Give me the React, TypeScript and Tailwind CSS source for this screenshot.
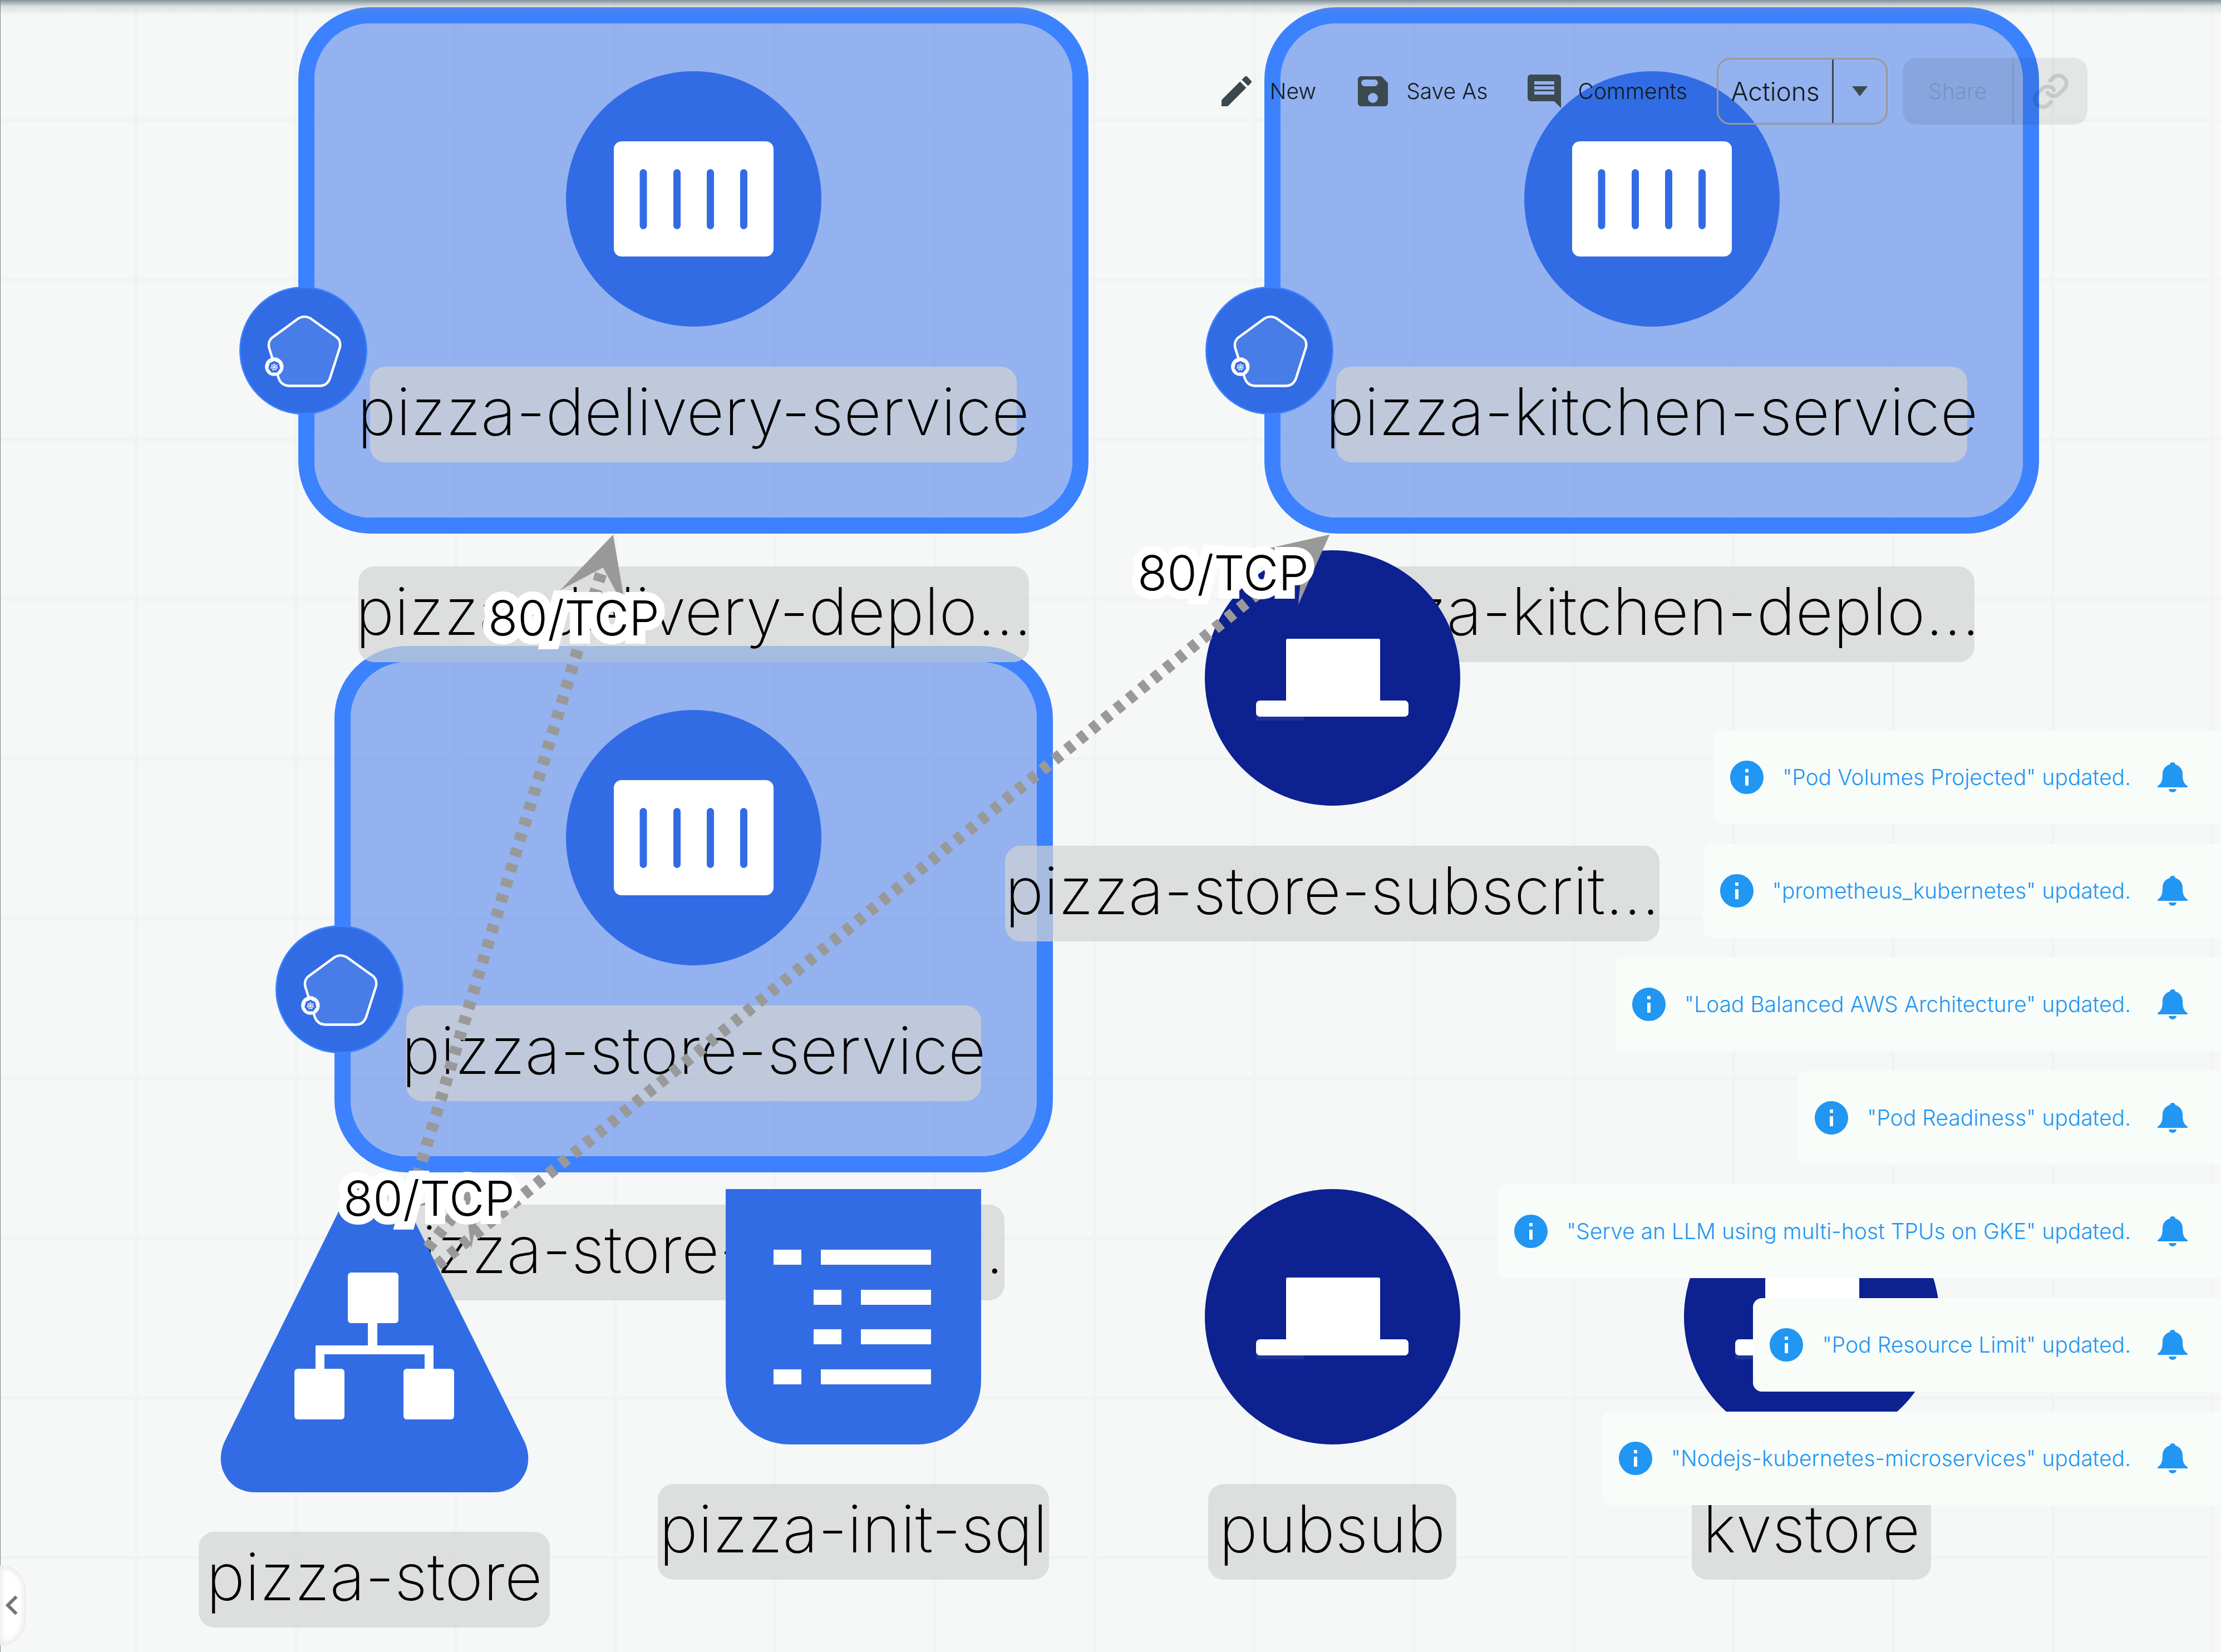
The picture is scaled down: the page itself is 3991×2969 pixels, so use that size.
import { Link } from "lucide-react";

const LABEL =
  "absolute flex items-center justify-center rounded-[28px] bg-[#d3d3d3]/70 h-[172px] pb-3 text-[118px] leading-none font-extralight whitespace-nowrap";

type Placed = { text: string; place: string };

const compounds = [
  { id: "delivery", place: "left-[536px] top-[13px] w-[1420px] h-[946px]" },
  { id: "kitchen", place: "left-[2272px] top-[13px] w-[1392px] h-[946px]" },
  { id: "store", place: "left-[601px] top-[1161px] w-[1291px] h-[946px]" },
];

const compoundLabels: Placed[] = [
  { text: "pizza-delivery-deplo...", place: "left-[644px] top-[1018px] w-[1205px]" },
  { text: "pizza-kitchen-deplo...", place: "left-[2387px] top-[1018px] w-[1161px]" },
  { text: "pizza-store-deploy...", place: "left-[687px] top-[2165px] w-[1118px]" },
];

const badges = [
  { id: "delivery", place: "left-[430px] top-[515px]" },
  { id: "kitchen", place: "left-[2166px] top-[515px]" },
  { id: "store", place: "left-[495px] top-[1663px]" },
];

const containers = [
  { id: "delivery", place: "left-[1017px] top-[128px]" },
  { id: "kitchen", place: "left-[2739px] top-[128px]" },
  { id: "store", place: "left-[1017px] top-[1276px]" },
];

const serviceLabels: Placed[] = [
  { text: "pizza-delivery-service", place: "left-[665px] top-[659px] w-[1162px]" },
  { text: "pizza-kitchen-service", place: "left-[2401px] top-[659px] w-[1134px]" },
  { text: "pizza-store-service", place: "left-[730px] top-[1807px] w-[1033px]" },
];

const hats = [
  { id: "subscription", place: "left-[2165px] top-[989px]" },
  { id: "pubsub", place: "left-[2165px] top-[2137px]" },
  { id: "kvstore", place: "left-[3026px] top-[2137px]" },
];

const nodeLabels: Placed[] = [
  { text: "pizza-store-subscrit...", place: "left-[1806px] top-[1520px] w-[1176px]" },
  { text: "pizza-store", place: "left-[357px] top-[2753px] w-[631px]" },
  { text: "pizza-init-sql", place: "left-[1182px] top-[2667px] w-[703px]" },
  { text: "pubsub", place: "left-[2171px] top-[2667px] w-[446px]" },
  { text: "kvstore", place: "left-[3040px] top-[2667px] w-[430px]" },
];

const edgeLabels: Placed[] = [
  { text: "80/TCP", place: "left-[881px] top-[1060px]" },
  { text: "80/TCP", place: "left-[2048px] top-[979px]" },
  { text: "80/TCP", place: "left-[621px] top-[2103px]" },
];

const toasts = [
  '"Pod Volumes Projected" updated.',
  '"prometheus_kubernetes" updated.',
  '"Load Balanced AWS Architecture" updated.',
  '"Pod Readiness" updated.',
  '"Serve an LLM using multi-host TPUs on GKE" updated.',
  '"Pod Resource Limit" updated.',
  '"Nodejs-kubernetes-microservices" updated.',
];

function ContainerIcon() {
  return (
    <svg viewBox="0 0 459 459" className="size-[459px]">
      <circle cx="229.5" cy="229.5" r="229.5" fill="#326ce5" />
      <rect x="86" y="126" width="287" height="207" rx="14" fill="#fff" />
      {[139, 199.5, 259.5, 319.5].map((x) => (
        <rect key={x} x={x - 6.5} y="176" width="13" height="108" rx="6.5" fill="#326ce5" />
      ))}
    </svg>
  );
}

function HatIcon() {
  return (
    <svg viewBox="0 0 459 459" className="size-[459px]">
      <circle cx="229.5" cy="229.5" r="229.5" fill="#0d2191" />
      <rect x="92" y="288" width="86" height="18" fill="#fff" opacity="0.08" />
      <rect x="146" y="159" width="169" height="130" rx="3" fill="#fff" />
      <rect x="92" y="270" width="274" height="29" rx="7" fill="#fff" />
    </svg>
  );
}

function PodBadge() {
  return (
    <svg viewBox="30 46 688 688" className="size-[230px]">
      <circle cx="374" cy="390" r="340" fill="#326ce5" stroke="#3c82ff" strokeWidth="8" />
      <path
        d="M350 216Q380 200 411 216L556 320Q577 339 571 372L517 540Q503 577 466 580H296Q256 577 242 540L190 375Q183 342 206 321Z"
        fill="#fff"
        fillOpacity="0.11"
        stroke="#fff"
        strokeWidth="13"
        strokeLinejoin="round"
      />
      <circle cx="218" cy="477" r="50" fill="#fff" />
      <path d="M218 446L243 458L250 486L233 508H203L186 486L193 458Z" fill="#326ce5" />
      <circle cx="218" cy="479" r="14" fill="none" stroke="#fff" strokeWidth="4" />
      <circle cx="218" cy="479" r="4" fill="#fff" />
      {[0, 1, 2, 3, 4, 5, 6].map((i) => (
        <path
          key={i}
          d="M218 479V457"
          stroke="#fff"
          strokeWidth="3"
          transform={`rotate(${(i * 360) / 7} 218 479)`}
        />
      ))}
    </svg>
  );
}

function TriangleNode() {
  return (
    <svg viewBox="396 2120 554 564" className="h-[564px] w-[554px]">
      <path
        d="M403 2592L620 2154Q640 2122 672.500 2122Q705 2122 725 2154L943 2592Q954 2618 946 2642Q930 2682 886 2682H460Q416 2682 400 2642Q392 2618 403 2592Z"
        fill="#326ce5"
      />
      <g fill="#fff">
        <rect x="625" y="2287" width="91" height="91" rx="6" />
        <rect x="529" y="2460" width="90" height="91" rx="6" />
        <rect x="725" y="2460" width="91" height="91" rx="6" />
        <path d="M661 2376H678V2418H779V2462H763V2434H583V2462H567V2418H661Z" />
      </g>
    </svg>
  );
}

function ConfigNode() {
  return (
    <svg viewBox="0 0 459 459" className="size-[459px]">
      <path d="M0 0H459V344A115 115 0 0 1 344 459H115A115 115 0 0 1 0 344Z" fill="#326ce5" />
      <g fill="#fff">
        {[109, 324].map((y) => (
          <path key={y} d={`M86 ${y}h50v27h-50zM171 ${y}h198v27h-198z`} />
        ))}
        {[181, 252].map((y) => (
          <path key={y} d={`M158 ${y}h50v27h-50zM243 ${y}h126v27h-126z`} />
        ))}
      </g>
    </svg>
  );
}

function Edges() {
  return (
    <svg viewBox="0 0 3991 2969" className="pointer-events-none absolute top-0 left-0 h-[2969px] w-[3991px] max-w-none">
      <g fill="none" stroke="#999" strokeWidth="21.500" strokeDasharray="14.330 14.330">
        <path d="M1079.800 1031.400L734 2166" />
        <path d="M2327.300 1011.500L784.500 2274.800" />
        <path d="M849 2142L768.600 2243.600" />
      </g>
      <g fill="#999">
        <path d="M1101.700 960.700L1006.300 1061L1083.600 1020L1124.900 1097.200Z" />
        <path d="M2389.300 960.700L2254.200 991.100L2341.300 1000L2332.800 1087.100Z" />
        <path d="M874.700 2109L749.400 2167.600L836.300 2157.600L846.600 2244.400Z" />
      </g>
    </svg>
  );
}

function PencilIcon() {
  return (
    <svg viewBox="0 0 24 24" fill="#3c494f" className="size-[72px]">
      <path d="M3 17.250V21h3.750L17.810 9.940l-3.750-3.750L3 17.250zM20.710 7.040c.39-.39.39-1.020 0-1.410l-2.340-2.340a.996.996 0 0 0-1.410 0l-1.830 1.830 3.750 3.750 1.830-1.830z" />
    </svg>
  );
}

function SaveIcon() {
  return (
    <svg viewBox="0 0 24 24" fill="#3c494f" fillRule="evenodd" className="size-[72px]">
      <path d="M17 3H5c-1.110 0-2 .9-2 2v14c0 1.100.89 2 2 2h14c1.100 0 2-.9 2-2V7l-4-4zM12 19a3 3 0 1 1 0-6 3 3 0 0 1 0 6zM7 5h6a2 2 0 0 1 0 4H7a2 2 0 0 1 0-4z" />
    </svg>
  );
}

function CommentIcon() {
  return (
    <svg viewBox="0 0 24 24" fill="#3c494f" className="size-[72px]">
      <path d="M21.990 4c0-1.100-.89-2-1.990-2H4c-1.100 0-2 .9-2 2v12c0 1.100.9 2 2 2h14l4 4-.01-18zM18 14H6v-2h12v2zm0-3H6V9h12v2zm0-3H6V6h12v2z" />
    </svg>
  );
}

function InfoIcon() {
  return (
    <svg viewBox="0 0 24 24" fill="#2196f3" className="size-[72px]">
      <path d="M12 2C6.480 2 2 6.480 2 12s4.480 10 10 10 10-4.480 10-10S17.520 2 12 2zm1 15h-2v-6h2v6zm0-8h-2V7h2v2z" />
    </svg>
  );
}

function BellIcon() {
  return (
    <svg viewBox="0 0 54 54" fill="#2196f3" className="size-[54px]">
      <path d="M27 0c-3 0-5 2-5 4-8 2-13 9-13 17 0 12-2 17-9 22v2h54v-2c-7-5-9-10-9-22 0-8-5-15-13-17 0-2-2-4-5-4zM20 48h14a7 6 0 0 1-14 0z" />
    </svg>
  );
}

function Toolbar() {
  return (
    <header className="absolute inset-x-0 top-[104px] flex h-[120px] items-center justify-end pr-[240px] text-[39px] font-light text-[#111b20]">
      <div className="mr-[53px] flex items-center gap-[66px]">
        <button type="button" className="flex items-center gap-6">
          <PencilIcon />
          New
        </button>
        <button type="button" className="flex items-center gap-6">
          <SaveIcon />
          Save As
        </button>
        <button type="button" className="flex items-center gap-6">
          <CommentIcon />
          Comments
        </button>
      </div>
      <div className="mr-[27px] flex h-full rounded-3xl border-3 border-[#999]">
        <button type="button" className="w-[207px] border-r-3 border-[#3c494f] text-[46px]">
          Actions
        </button>
        <button type="button" aria-label="More actions" className="flex w-[94px] items-center justify-center">
          <svg viewBox="0 0 28 18" fill="#3c494f" className="h-[18px] w-7">
            <path d="M0 0h28L14 18z" />
          </svg>
        </button>
      </div>
      <div className="flex h-full overflow-hidden rounded-3xl bg-black/7 text-black/12">
        <button type="button" disabled className="w-[200px] border-r-3 border-black/8">
          Share
        </button>
        <button type="button" disabled aria-label="Copy link" className="flex w-[132px] items-center justify-center">
          <Link size={68} strokeWidth={2.5} />
        </button>
      </div>
    </header>
  );
}

export default function App() {
  return (
    <main className="relative h-screen w-full overflow-hidden bg-[#f6f8f8] font-['Inter',sans-serif] text-black">
      <div className="absolute inset-0 bg-[linear-gradient(to_right,#f2f4f4_6px,transparent_6px),linear-gradient(to_bottom,#f2f4f4_6px,transparent_6px)] bg-[size:287px_287px] bg-[position:242px_213px]" />

      <section aria-label="Design canvas" className="absolute inset-0">
        {compounds.map((c) => (
          <div
            key={c.id}
            className={`absolute rounded-[130px] border-[29px] border-[#3c82ff] bg-[#326ce5]/50 bg-clip-padding ${c.place}`}
          />
        ))}
        {compoundLabels.map((l) => (
          <div key={l.text} className={`${LABEL} ${l.place}`}>
            {l.text}
          </div>
        ))}
        {badges.map((b) => (
          <div key={b.id} className={`absolute ${b.place}`}>
            <PodBadge />
          </div>
        ))}
        {containers.map((c) => (
          <div key={c.id} className={`absolute ${c.place}`}>
            <ContainerIcon />
          </div>
        ))}
        {serviceLabels.map((l) => (
          <div key={l.text} className={`${LABEL} ${l.place}`}>
            {l.text}
          </div>
        ))}
        {hats.map((h) => (
          <div key={h.id} className={`absolute ${h.place}`}>
            <HatIcon />
          </div>
        ))}
        <div className="absolute top-[2120px] left-[396px]">
          <TriangleNode />
        </div>
        <div className="absolute top-[2137px] left-[1304px]">
          <ConfigNode />
        </div>
        {nodeLabels.map((l) => (
          <div key={l.text} className={`${LABEL} ${l.place}`}>
            {l.text}
          </div>
        ))}
        <Edges />
        {edgeLabels.map((l) => (
          <div
            key={l.place}
            className={`absolute flex h-[100px] w-[300px] items-center justify-center text-[87px] leading-none font-light whitespace-nowrap [-webkit-text-stroke:30px_white] [paint-order:stroke_fill] [stroke-linejoin:round] ${l.place}`}
          >
            {l.text}
          </div>
        ))}
      </section>

      <div className="absolute inset-x-0 top-0 h-7 bg-linear-to-b from-[#82929a] via-[#82929a]/25 via-40% to-transparent" />
      <div className="absolute inset-y-0 left-0 w-px bg-[#7f8485]" />

      <Toolbar />

      <ul aria-label="Notifications" className="absolute top-[1313px] right-0 flex flex-col items-end gap-9">
        {toasts.map((t) => (
          <li
            key={t}
            className="flex h-[168px] items-center rounded-l-2xl bg-[#f9fdfa] pr-[60px] pl-6 text-[39px] font-light text-[#2196f3]"
          >
            <InfoIcon />
            <span className="mr-12 ml-7">{t}</span>
            <button type="button" aria-label="Open notifications">
              <BellIcon />
            </button>
          </li>
        ))}
      </ul>

      <button
        type="button"
        aria-label="Expand panel"
        className="absolute bottom-3 left-0 flex h-36 w-[46px] items-center rounded-r-[46px] border border-l-0 border-[#e4e5e5] bg-white pl-[10px] shadow-[inset_0_0_14px_#e0e0e0]"
      >
        <svg viewBox="0 0 22 36" fill="none" stroke="#757575" strokeWidth="6" className="h-9 w-[22px]">
          <path d="M19.500 2.500L4 18L19.500 33.500" />
        </svg>
      </button>
    </main>
  );
}
